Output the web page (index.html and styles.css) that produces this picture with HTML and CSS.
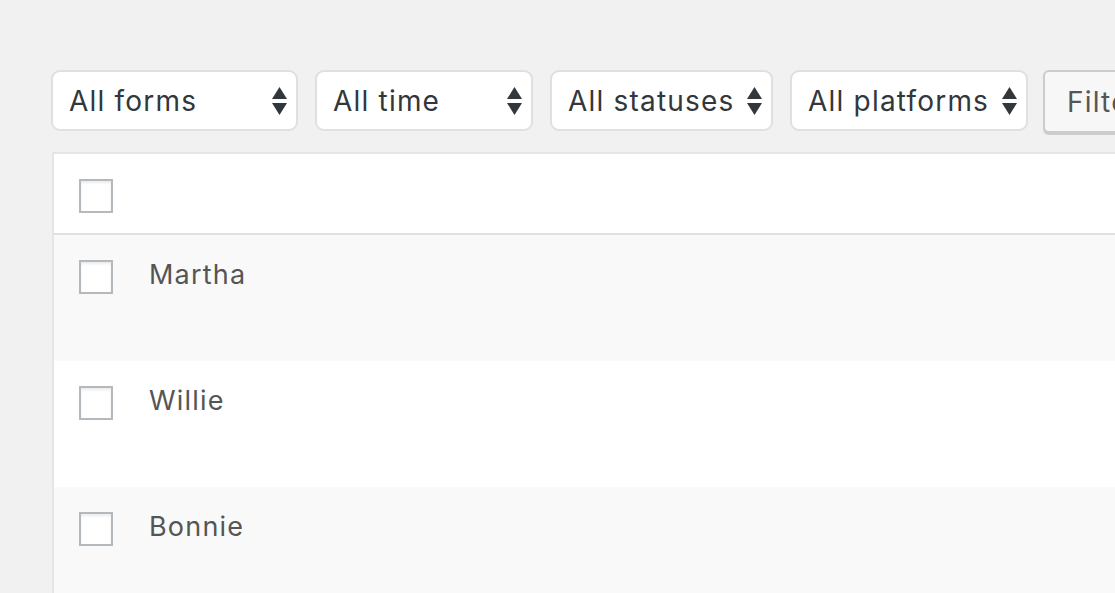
FILE: index.html
```html
<!DOCTYPE html>
<html lang="en">
<head>
<meta charset="utf-8">
<title>Entries</title>
<link rel="stylesheet" href="styles.css">
</head>
<body>
<div class="page">
  <div class="filters">
    <div class="select select-forms"><span class="select-label">All forms</span><svg class="arrows" width="15" height="30" viewBox="0 0 15 30"><path d="M7.5 1 L15 13 L0 13 Z" fill="#32373c"/><path d="M0 17 L15 17 L7.5 29 Z" fill="#32373c"/></svg></div>
    <div class="select select-time"><span class="select-label">All time</span><svg class="arrows" width="15" height="30" viewBox="0 0 15 30"><path d="M7.5 1 L15 13 L0 13 Z" fill="#32373c"/><path d="M0 17 L15 17 L7.5 29 Z" fill="#32373c"/></svg></div>
    <div class="select select-statuses"><span class="select-label">All statuses</span><svg class="arrows" width="15" height="30" viewBox="0 0 15 30"><path d="M7.5 1 L15 13 L0 13 Z" fill="#32373c"/><path d="M0 17 L15 17 L7.5 29 Z" fill="#32373c"/></svg></div>
    <div class="select select-platforms"><span class="select-label">All platforms</span><svg class="arrows" width="15" height="30" viewBox="0 0 15 30"><path d="M7.5 1 L15 13 L0 13 Z" fill="#32373c"/><path d="M0 17 L15 17 L7.5 29 Z" fill="#32373c"/></svg></div>
    <button class="button">Filter</button>
  </div>
  <div class="table">
    <div class="row head">
      <span class="check"></span>
    </div>
    <div class="row alt">
      <span class="check"></span><span class="name">Martha</span>
    </div>
    <div class="row">
      <span class="check"></span><span class="name">Willie</span>
    </div>
    <div class="row alt">
      <span class="check"></span><span class="name">Bonnie</span>
    </div>
  </div>
</div>
</body>
</html>
```
FILE: styles.css
```css
html, body {
  margin: 0;
  padding: 0;
  background: #f1f1f1;
  overflow: hidden;
}
body {
  width: 1115px;
  height: 593px;
  font-family: Inter, "Noto Sans", "Liberation Sans", sans-serif;
}
.page {
  padding: 70px 0 0 51px;
}
.filters {
  display: flex;
  gap: 17px;
  align-items: flex-start;
  white-space: nowrap;
}
.select {
  box-sizing: border-box;
  height: 61px;
  display: flex;
  align-items: center;
  justify-content: space-between;
  padding: 0 9px 0 16px;
  background: #fff;
  border: 2px solid #e0e0e0;
  border-radius: 9px;
  color: #32373c;
  font-size: 28px;
  letter-spacing: 1.2px;
  flex-shrink: 0;
}
.select-forms { width: 247px; }
.select-time { width: 218px; }
.select-statuses { width: 223px; }
.select-platforms { width: 238px; }
.select-label {
  line-height: 1;
}
.arrows {
  flex-shrink: 0;
}
.button {
  box-sizing: border-box;
  height: 63px;
  width: 160px;
  flex-shrink: 0;
  margin-left: -2px;
  padding: 0 22px;
  text-align: left;
  background: #f7f7f7;
  border: 2px solid #cccccc;
  border-radius: 6px;
  box-shadow: 0 2px 0 #cccccc;
  color: #555;
  font-family: inherit;
  font-size: 28px;
  letter-spacing: 1.2px;
}
.table {
  margin-top: 19px;
  margin-left: 1px;
  background: #fff;
  border-top: 2px solid #e5e5e5;
  border-left: 2px solid #e5e5e5;
}
.row {
  display: flex;
  align-items: flex-start;
  box-sizing: border-box;
  height: 126px;
  padding: 25px 0 0 25px;
}
.row.head {
  height: 81px;
  border-bottom: 2px solid #e1e1e1;
}
.row.alt {
  background: #f9f9f9;
}
.check {
  box-sizing: border-box;
  width: 34px;
  height: 34px;
  flex-shrink: 0;
  background: #fff;
  border: 2px solid #b4b9be;
  box-shadow: inset 0 2px 3px rgba(0,0,0,0.08);
}
.name {
  margin-left: 36px;
  font-size: 27px;
  line-height: 30px;
  letter-spacing: 1.2px;
  color: #555;
}
```
